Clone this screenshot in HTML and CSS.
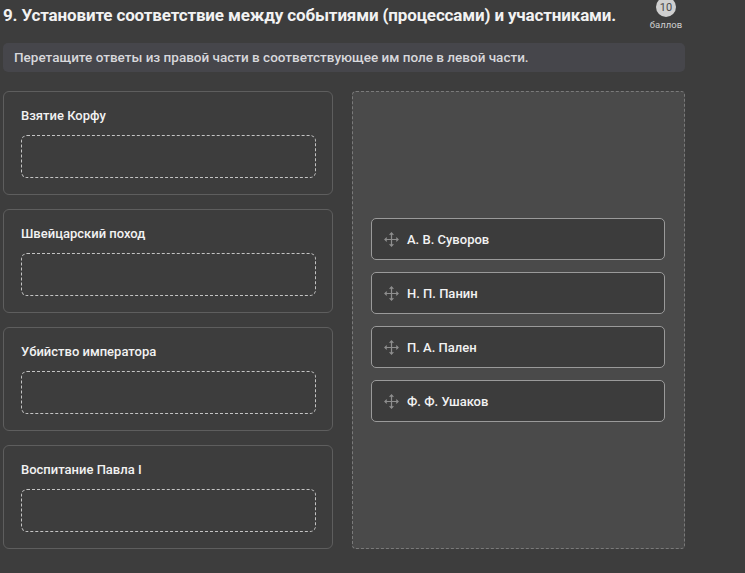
FILE: index.html
```html
<!DOCTYPE html>
<html lang="ru">
<head>
  <meta charset="UTF-8" />
  <title>Вопрос 9</title>
  <link rel="stylesheet" href="styles.css">
</head>
<body>
  <div class="question">
    <div class="head">
      <h1>9. Установите соответствие между событиями (процессами) и участниками.</h1>
      <div class="score">
        <span class="score-num">10</span>
        <span class="score-label">баллов</span>
      </div>
    </div>

    <div class="hint">Перетащите ответы из правой части в соответствующее им поле в левой части.</div>

    <div class="board">
      <div class="targets">
        <div class="target">
          <div class="target-title">Взятие Корфу</div>
          <div class="drop"></div>
        </div>
        <div class="target">
          <div class="target-title">Швейцарский поход</div>
          <div class="drop"></div>
        </div>
        <div class="target">
          <div class="target-title">Убийство императора</div>
          <div class="drop"></div>
        </div>
        <div class="target">
          <div class="target-title">Воспитание Павла I</div>
          <div class="drop"></div>
        </div>
      </div>

      <div class="pool">
        <div class="item">
          <svg class="move" viewBox="0 0 16 16"><path d="M8 1v14M1 8h14M6 3l2-2 2 2M6 13l2 2 2-2M3 6L1 8l2 2M13 6l2 2-2 2"/></svg>
          А. В. Суворов
        </div>
        <div class="item">
          <svg class="move" viewBox="0 0 16 16"><path d="M8 1v14M1 8h14M6 3l2-2 2 2M6 13l2 2 2-2M3 6L1 8l2 2M13 6l2 2-2 2"/></svg>
          Н. П. Панин
        </div>
        <div class="item">
          <svg class="move" viewBox="0 0 16 16"><path d="M8 1v14M1 8h14M6 3l2-2 2 2M6 13l2 2 2-2M3 6L1 8l2 2M13 6l2 2-2 2"/></svg>
          П. А. Пален
        </div>
        <div class="item">
          <svg class="move" viewBox="0 0 16 16"><path d="M8 1v14M1 8h14M6 3l2-2 2 2M6 13l2 2 2-2M3 6L1 8l2 2M13 6l2 2-2 2"/></svg>
          Ф. Ф. Ушаков
        </div>
      </div>
    </div>
  </div>
</body>
</html>
```

FILE: styles.css
```css
body {
  margin: 0;
  background-color: #3d3d3d;
  font-family: Roboto, "Noto Sans", sans-serif;
  color: #f2f2f2;
}
.question {
  width: 682px;
  padding: 0 0 0 3px;
}
.head {
  display: flex;
  align-items: flex-start;
  justify-content: space-between;
  height: 43px;
}
h1 {
  margin: 3px 0 0;
  font-size: 17px;
  font-weight: 700;
  letter-spacing: -0.15px;
  line-height: 24px;
}
.score {
  display: flex;
  flex-direction: column;
  align-items: center;
  width: 38px;
  margin-top: -3px;
}
.score-num {
  width: 20px;
  height: 20px;
  border-radius: 50%;
  background-color: #cfcfcf;
  color: #4a4a4a;
  font-size: 11px;
  line-height: 22px;
  text-align: center;
}
.score-label {
  font-size: 9.5px;
  color: #cfcfcf;
  margin-top: 2px;
}
.hint {
  height: 29px;
  line-height: 29px;
  padding-left: 11px;
  border-radius: 5px;
  background-color: #46464b;
  color: #d8d8dc;
  font-size: 13.5px;
  font-weight: 500;
}
.board {
  display: flex;
  gap: 19px;
  margin-top: 19px;
}
.targets {
  width: 330px;
  display: flex;
  flex-direction: column;
  gap: 14px;
}
.target {
  height: 102px;
  border: 1px solid #5e5e5e;
  border-radius: 6px;
  padding: 0 16px 0 17px;
}
.target-title {
  font-size: 13px;
  font-weight: 500;
  line-height: 16px;
  margin-top: 16px;
}
.drop {
  height: 41px;
  margin-top: 11px;
  border: 1px dashed #c4c4c4;
  border-radius: 6px;
}
.pool {
  flex: 1;
  border: 1px dashed #7a7a7a;
  border-radius: 4px;
  background-color: #4a4a4a;
  display: flex;
  flex-direction: column;
  justify-content: center;
  gap: 12px;
  padding: 0 19px 0 18px;
}
.item {
  height: 40px;
  display: flex;
  align-items: center;
  gap: 8px;
  padding-left: 12px;
  border: 1px solid #9a9a9a;
  border-radius: 5px;
  background-color: #3c3c3c;
  font-size: 13px;
  font-weight: 500;
}
.move {
  width: 15px;
  height: 15px;
  fill: none;
  stroke: #8e8e8e;
  stroke-width: 1.3;
}
```
